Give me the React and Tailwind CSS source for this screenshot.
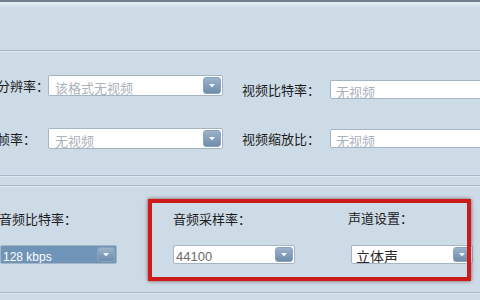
import React from 'react'

const cjk = "font-['Noto_Sans_CJK_SC','Noto_Sans',sans-serif]"

function DropButton() {
  return (
    <div className="absolute right-[1px] top-[1px] bottom-[1px] w-[18px] rounded-[3px] border border-[#8aa2bb] bg-gradient-to-b from-[#9bb3cb] to-[#6f8cab] flex items-center justify-center">
      <svg width="6" height="4" viewBox="0 0 6 4">
        <path d="M0 0 L6 0 L3 3.5 Z" fill="#f2f6fa" />
      </svg>
    </div>
  )
}

function Select({ width, text, bg = 'bg-white', pad = 'pl-[6px]', button = true, height = 'h-[21px]' }) {
  return (
    <div className={`relative ${width} ${height} shrink-0 rounded-[2px] border border-[#a5b5c5] ${bg} flex items-center ${pad} overflow-hidden`}>
      <span className="whitespace-nowrap leading-none">{text}</span>
      {button && <DropButton />}
    </div>
  )
}

function Label({ children, className = '' }) {
  return (
    <div className={`text-[13px] leading-[18px] text-[#1c1c1c] whitespace-nowrap ${cjk} ${className}`}>
      {children}
    </div>
  )
}

function Separator() {
  return (
    <div>
      <div className="h-px bg-[#a9b8c6]" />
      <div className="h-px bg-[#e0e9f0]" />
    </div>
  )
}

const hint = `text-[13px] text-[#a9b1ba] ${cjk}`

export default function App() {
  return (
    <div className={`relative w-[480px] h-[300px] overflow-hidden bg-[#cddbe7] ${cjk}`}>
      {/* top edge */}
      <div className="h-[2px] bg-[#6f7d8d]" />
      <div className="h-[6px] bg-gradient-to-b from-[#e8f0f6] to-[#cddbe7]" />
      <div className="h-[42px]" />
      <Separator />

      {/* video rows */}
      <div className="mt-[23px] flex items-start">
        <div className="-ml-[29px] w-[77px] shrink-0 h-[21px] flex items-center">
          <Label>视频分辨率：</Label>
        </div>
        <Select width="w-[175px]" text={<span className={hint}>该格式无视频</span>} />
        <div className="ml-[19px] mt-[5px] flex items-center">
          <Label className="w-[88px] shrink-0">视频比特率：</Label>
          <Select width="w-[180px]" height="h-[19px]" pad="pl-[5px]" button={false} text={<span className={hint}>无视频</span>} />
        </div>
      </div>

      <div className="mt-[29px] flex items-start">
        <div className="-ml-[29px] w-[77px] shrink-0 h-[21px] flex items-center">
          <Label>视频帧率：</Label>
        </div>
        <Select width="w-[175px]" text={<span className={hint}>无视频</span>} />
        <div className="ml-[19px] mt-[1px] flex items-center">
          <Label className="w-[88px] shrink-0">视频缩放比：</Label>
          <Select width="w-[180px]" height="h-[19px]" pad="pl-[5px]" button={false} text={<span className={hint}>无视频</span>} />
        </div>
      </div>

      <div className="mt-[26px]">
        <Separator />
      </div>
      <div className="mt-[8px]">
        <Separator />
      </div>

      {/* audio row */}
      <div className="mt-[23px] flex items-start">
        <div className="w-[117px] flex flex-col">
          <Label className="-ml-[1px]">音频比特率：</Label>
          <div className="mt-[17px]">
            <Select
              width="w-[117px]"
              height="h-[19px]"
              bg="bg-[#7093b8]"
              pad="pl-[2px]"
              text={<span className="text-[12px] font-['Liberation_Sans',sans-serif] text-white">128 kbps</span>}
            />
          </div>
        </div>
        <div className="ml-[56px] w-[122px] flex flex-col">
          <Label>音频采样率：</Label>
          <div className="mt-[17px]">
            <Select
              width="w-[122px]"
              height="h-[19px]"
              pad="pl-[2px]"
              text={<span className="text-[13px] font-['Liberation_Sans',sans-serif] text-[#6b6b6b]">44100</span>}
            />
          </div>
        </div>
        <div className="ml-[53px] w-[125px] flex flex-col">
          <Label className="-mt-[1px]">声道设置：</Label>
          <div className="mt-[18px] ml-[3px]">
            <Select
              width="w-[122px]"
              height="h-[19px]"
              pad="pl-[4px]"
              text={<span className={`text-[14px] ${cjk} text-[#2a2a2a]`}>立体声</span>}
            />
          </div>
        </div>
      </div>

      <div className="mt-[28px]">
        <Separator />
      </div>

      {/* red annotation box */}
      <div className="absolute left-[148px] top-[199px] w-[323px] h-[82px] border-[4px] border-[#cf1a1a] shadow-[0_0_4px_rgba(60,0,0,0.6)]" />
    </div>
  )
}
